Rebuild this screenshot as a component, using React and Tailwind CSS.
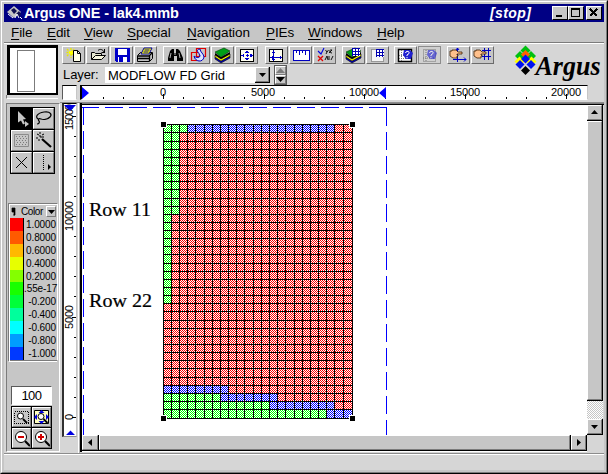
import React from "react";

const SANS = "font-['Liberation_Sans',Arial,sans-serif]";
const RAISED = "border border-t-white border-l-white border-b-[#7b7b7b] border-r-[#7b7b7b] bg-[#c6c6c6]";

/* ---------- toolbar drawings (23 x 18) ---------- */
const Layers = () => (
  <g>
    <path d="M4 11l6 4 9-5v2l-9 5-6-4z" fill="#0000c0" stroke="#000" strokeWidth=".6" />
    <path d="M4 9l6 4 9-5v2l-9 5-6-4z" fill="#ff0" stroke="#000" strokeWidth=".6" />
    <path d="M4 7l6 4 9-5v2l-9 5-6-4z" fill="#000" />
    <path d="M4 6l9-4 6 3-9 6z" fill="#00a018" stroke="#003800" strokeWidth=".6" />
  </g>
);

const Question = ({ dim }) => (
  <g opacity={dim ? 0.6 : 1}>
    <path d="M10 4h6l3 3-2 6h-5l-3-4z" fill="#2020d0" />
    <path d="M11.500 7c.5-2.500 4.500-2 3.500.5l-2 1.500v1M13 11v1.300" fill="none" stroke="#fff" />
  </g>
);

const Hand = () => (
  <path d="M3 5h2v-1h4l2 2h4v2h-5v1h1v1h-1v2H6l-3-2z" fill="#ffc08c" stroke="#402000" strokeWidth=".8" />
);

const Grid = ({ x, y, w = 8, h = 8 }) => (
  <g transform={`translate(${x},${y})`} shapeRendering="crispEdges">
    <rect width={w} height={h} fill="#fff" />
    <path d={`M0 .5H${w}M0 3.500H${w}M0 6.500H${w}M.5 0V${h}M3.500 0V${h}M6.500 0V${h}`} stroke="#0000b0" fill="none" />
  </g>
);

const ICONS = {
  new: (
    <>
      <path d="M9 2v10M4.500 6.500h9M5 3l7 7M5 10l7-7" stroke="#e8e800" strokeWidth="1.400" strokeDasharray="2 1" />
      <path d="M7 5h4v3H7z" fill="#ff0" />
      <path d="M11.500 4.500h4l3 3v8h-7z" fill="#ffffe8" stroke="#000" />
      <path d="M15.500 4.500v3h3" fill="none" stroke="#000" />
    </>
  ),
  open: (
    <>
      <path d="M5.500 13.500v-7h3l1 1h6v3" fill="#e8e8d0" stroke="#000" />
      <path d="M5.500 13.500l4-4h10l-4 4z" fill="#f4f4dc" stroke="#000" />
      <path d="M12 4.500c2-2 5-1 6 1.500M18.500 3v4M15.500 6.500h3" fill="none" stroke="#000" />
    </>
  ),
  save: (
    <g shapeRendering="crispEdges">
      <path d="M5 2h15v14H6l-1-1z" fill="#0000c8" />
      <path d="M8 3h9v6H8zM8 11h9v5H8z" fill="#fff" />
      <path d="M9 11h4v5H9z" fill="#0000c8" />
    </g>
  ),
  print: (
    <>
      <path d="M3.500 9.500l3-3h12v6l-3 3h-12z" fill="#c0c0c0" stroke="#000" />
      <path d="M4 10h11l3-3M4 12.500h11M15.500 10v5" fill="none" stroke="#000" strokeWidth="1.300" />
      <path d="M7 8l3-6h8l-3 6z" fill="#ff0" stroke="#0000a0" />
      <path d="M10.500 4h5M9.500 6h5" stroke="#0000a0" />
    </>
  ),
  find: (
    <>
      <path d="M7 5l2-2h2v4h2V3h2l2 2 3 7v3h-6v-5h-3v5H5v-3z" fill="#000" />
      <path d="M8 7l-1 5M16 7l1 5M12 7v2" stroke="#c6c6c6" strokeWidth=".9" />
    </>
  ),
  rotate: (
    <>
      <path d="M9.500 2.500h9v8h-9zM4.500 6.500h8v8h-8z" fill="none" stroke="#e00000" strokeWidth="1.200" />
      <path d="M13 3c-6 1 0 4 0 7-1 3-5 1-6 0 1 6 9 7 10 1 0-3-4-5-4-8z" fill="#d8e4ff" stroke="#0000c0" />
    </>
  ),
  layers: <Layers />,
  pan: (
    <g shapeRendering="crispEdges">
      <path d="M5.500 3.500h13v12h-13z" fill="#fffff0" stroke="#000" />
      <path d="M12 4l2 3h-4zM12 15l2-3h-4zM6 9.500l3-2v4zM18 9.500l-3-2v4z" fill="#0000d0" />
      <path d="M12 8v3M10.500 9.500h3" stroke="#0000d0" />
    </g>
  ),
  extent: (
    <g shapeRendering="crispEdges">
      <path d="M4.500 3.500h13v12h-13z" fill="#fffff0" stroke="#000" />
      <path d="M8.500 4v11M5 11.500h12" stroke="#0000c0" />
      <path d="M7 6h3M7 13h3M7 10v3M15 10v3" stroke="#0000c0" />
    </g>
  ),
  ruler: (
    <g shapeRendering="crispEdges">
      <path d="M4.500 4.500h16v10h-16z" fill="#fff" stroke="#0000c0" />
      <path d="M7.500 5v2M10.500 5v4M13.500 5v2M16.500 5v4" stroke="#0000c0" />
    </g>
  ),
  check: (
    <>
      <path d="M5 5l3 3 3-6" fill="none" stroke="#0000e0" strokeWidth="1.100" />
      <path d="M5 10l5 5M10 10l-5 5" stroke="#e00000" strokeWidth="1.300" />
      <path d="M12.500 4l1.500 2 1.500-2M14 6l-1 2M19 4c-3-1-3 3 0 3M16 7l3-3M12 14l2-4 1 4M16 14v-4M18 14l2-4" fill="none" stroke="#000" strokeWidth=".9" />
    </>
  ),
  layerGrid: (
    <>
      <Layers />
      <Grid x={10} y={2} />
    </>
  ),
  dotGrid: (
    <>
      <path d="M5.500 3.500h12v12h-12z" fill="#f4f4f4" stroke="#555" strokeDasharray="1 1" />
      <Grid x={10} y={3} />
    </>
  ),
  query: (
    <>
      <path d="M4.500 3.500h13v12h-13z" fill="#fff" stroke="#000" strokeWidth="1.400" />
      <path d="M5 12.500h11M7.500 4v11M5 9.500h11" stroke="#777" strokeDasharray="1 1" />
      <Question />
    </>
  ),
  queryDim: (
    <>
      <path d="M5.500 3.500h12v12h-12zM8 4v11M5 12h12" fill="none" stroke="#777" strokeDasharray="1 1" />
      <Question dim />
    </>
  ),
  handAxes: (
    <>
      <path d="M10.500 2v14M6 13.500h13M9 4l1.500-2L12 4M17 11.500l2 2-2 2" fill="none" stroke="#0000d0" />
      <Hand />
    </>
  ),
  handGrid: (
    <>
      <path d="M13.500 2v12M17.500 2v12M11 4.500h9M11 10.500h9" stroke="#0000c0" fill="none" />
      <Hand />
    </>
  ),
};

const ToolButton = ({ name, pressed }) => (
  <div
    className={`h-[18px] w-[23px] border ${
      pressed ? "border-[#8c8c8c] bg-[#d0d0d0]" : "border-t-white border-l-white border-b-[#6b6b6b] border-r-[#6b6b6b] bg-[#c6c6c6]"
    }`}
  >
    <svg className="-ml-px -mt-px block" width="23" height="18">{ICONS[name]}</svg>
  </div>
);

const GROUPS = [
  { gap: "ml-0", items: ["new", "open", "save", "print"] },
  { gap: "ml-[6px]", items: ["find", "rotate", "layers", "pan"] },
  { gap: "ml-[7px]", items: ["extent", "ruler", "check"] },
  { gap: "ml-[6px]", items: ["layerGrid", "dotGrid"] },
  { gap: "ml-[5px]", items: ["query", "queryDim"] },
  { gap: "ml-[6px]", items: ["handAxes", "handGrid"] },
];

const Logo = () => {
  const d = (x, y, r, fill) => <path key={`${x}-${y}`} d={`M${x} ${y - r}l${r} ${r}-${r} ${r}-${r}-${r}z`} fill={fill} />;
  return (
    <svg width="92" height="40" viewBox="512 45 92 40" className="block">
      {d(525.5, 50.5, 5, "#00c010")}
      {d(520, 56, 5, "#00c010")}
      {d(531, 56, 5, "#00c010")}
      {d(525.5, 54.5, 4.5, "#ff6000")}
      {d(519.5, 61.5, 5, "#ff0")}
      {d(531.5, 61.5, 5, "#ff0")}
      {d(525.5, 59, 4.5, "#0010f0")}
      {d(520, 64.500, 4.5, "#0010f0")}
      {d(531, 64.500, 4.5, "#0010f0")}
      {d(525.5, 70.500, 4.5, "#000")}
      <text x="535.500" y="74.500" textLength="65" lengthAdjust="spacingAndGlyphs" fontSize="28" fontWeight="bold" fontStyle="italic" fill="#000" fontFamily="'Liberation Serif', serif">
        Argus
      </text>
    </svg>
  );
};

/* ---------- rulers ---------- */
const MINOR = Array.from({ length: 24 }, (_, i) => Math.round(102.5 + i * 20.15));

const HRuler = () => (
  <svg width="503" height="13" viewBox="82 86 503 13" className="block">
    <g shapeRendering="crispEdges">
      {MINOR.map((x) => (
        <rect key={x} x={x} y="97" width="1" height="2" fill="#000" />
      ))}
      {[163, 264, 364, 465, 566].map((x) => (
        <rect key={x} x={x} y="94" width="1" height="5" fill="#000" />
      ))}
    </g>
    <path d="M82 87l7 6-7 6zM386 87l-7 6 7 6z" fill="#00f" />
    {[["0", 160, 6], ["5000", 251, 24], ["10000", 349, 30], ["15000", 450, 30], ["20000", 551, 30]].map(([t, x, w]) => (
      <text key={t} x={x} y="96" textLength={w} fontSize="11" fontFamily="'Liberation Sans', sans-serif">{t}</text>
    ))}
  </svg>
);

const VMINOR = Array.from({ length: 16 }, (_, i) => Math.round(417 - i * 20.1));

const VRuler = () => (
  <svg width="12" height="331" viewBox="64 104 12 331" className="block">
    <g shapeRendering="crispEdges">
      {VMINOR.map((y) => (
        <rect key={y} x="74" y={y} width="2" height="1" fill="#000" />
      ))}
      {[417, 317, 216, 116].map((y) => (
        <rect key={y} x="72" y={y} width="4" height="1" fill="#000" />
      ))}
    </g>
    {[["0", 420, 6], ["5000", 329, 24], ["10000", 231, 30], ["15000", 130, 26]].map(([t, y, w]) => (
      <text key={t} transform={`translate(73,${y}) rotate(-90)`} textLength={w} fontSize="11" fontFamily="'Liberation Sans', sans-serif">{t}</text>
    ))}
    <path d="M64 105h12l-6 6zM66 435l4.500-4.500 4.500 4.500z" fill="#0000e0" />
  </svg>
);

/* ---------- model grid ---------- */
const XS = [163, 171, 179, 187, 195, 204, 212, 220, 228, 236, 244, 253, 261, 269, 277, 285, 294, 302, 310, 318, 326, 334, 343, 352];
const YS = [124, 132, 141, 149, 157, 165, 173, 181, 189, 198, 206, 214, 222, 230, 238, 246, 254, 263, 271, 279, 287, 295, 303, 311, 320, 328, 336, 344, 352, 360, 368, 377, 385, 393, 401, 409, 418];
const ZONES = [
  [163, 124, 352, 418, "red"],
  [163, 124, 187, 132, "green"],
  [187, 124, 334, 132, "blue"],
  [163, 132, 179, 214, "green"],
  [163, 214, 171, 303, "green"],
  [163, 385, 228, 393, "blue"],
  [163, 393, 220, 401, "green"],
  [220, 393, 277, 401, "blue"],
  [163, 401, 269, 409, "green"],
  [269, 401, 334, 409, "blue"],
  [163, 409, 326, 418, "green"],
  [326, 409, 352, 418, "blue"],
];
const HUES = { red: "#ff0000", green: "#00ff00", blue: "#0000ff" };

const ModelCanvas = () => (
  <svg width="505" height="330" viewBox="82 105 505 330" className="block bg-white" shapeRendering="crispEdges">
    <defs>
      {Object.entries(HUES).map(([k, c]) => (
        <pattern key={k} id={k} width="2" height="2" patternUnits="userSpaceOnUse">
          <rect width="2" height="2" fill="#fff" />
          <rect width="1" height="1" fill={c} />
          <rect x="1" y="1" width="1" height="1" fill={c} />
        </pattern>
      ))}
    </defs>
    <g stroke="#0000ff" strokeDasharray="18 6" fill="none">
      <path d="M81 107.500H387" />
      <path d="M83.500 107V435" />
      <path d="M386.500 108V435" />
    </g>
    {ZONES.map(([a, b, c, d, k], i) => (
      <g key={i}>
        <rect x={a} y={b} width={c - a} height={d - b} fill="#fff" />
        <rect x={a} y={b} width={c - a} height={d - b} fill={`url(#${k})`} />
      </g>
    ))}
    {XS.map((x) => <rect key={x} x={x} y="124" width="1" height="295" />)}
    {YS.map((y) => <rect key={y} x="163" y={y} width="190" height="1" />)}
    {[[163, 124], [352, 124], [163, 418], [352, 418]].map(([x, y]) => (
      <g key={`${x}${y}`}>
        <rect x={x - 3} y={y - 3} width="7" height="7" fill="#fff" />
        <rect x={x - 2} y={y - 2} width="5" height="5" />
      </g>
    ))}
    <g fontFamily="'Liberation Serif', serif" fontSize="19" stroke="#000" strokeWidth=".2">
      <text x="89" y="216" textLength="62" lengthAdjust="spacingAndGlyphs">Row 11</text>
      <text x="89" y="307" textLength="63" lengthAdjust="spacingAndGlyphs">Row 22</text>
    </g>
  </svg>
);

/* ---------- left column ---------- */
const Tool = ({ active, children }) => (
  <div className={`h-[21px] w-[21px] ${active ? "bg-black" : RAISED}`}>
    <svg className={active ? "block" : "-ml-px -mt-px block"} width="21" height="21">{children}</svg>
  </div>
);

const DotPad = () => {
  const dots = [];
  for (let y = 6; y < 15; y += 2) for (let x = 5 + (y % 4 ? 0 : 1); x < 17; x += 3) dots.push([x, y]);
  return dots.map(([x, y]) => <rect key={`${x},${y}`} x={x} y={y} width="1" height="1" fill="#7b7b7b" />);
};

const SCALE = [
  ["1.0000", "bg-[#ff0000]"], ["0.8000", "bg-[#ff5a00]"], ["0.6000", "bg-[#ffb900]"], ["0.4000", "bg-[#e7ff00]"],
  ["0.2000", "bg-[#84ff00]"], [".55e-17", "bg-[#18ff00]"], ["-0.200", "bg-[#00ff39]"], ["-0.400", "bg-[#00ff9c]"],
  ["-0.600", "bg-[#00ffff]"], ["-0.800", "bg-[#009cff]"], ["-1.000", "bg-[#0039ff]"],
];

const Lens = ({ sign }) => (
  <>
    <path d="M13 13l5 5" stroke="#000" strokeWidth="2.200" />
    <circle cx="9" cy="9" r="5.500" fill="#fff" stroke="#000" />
    <path d={sign === "+" ? "M6 9h6M9 6v6" : "M6 9h6"} stroke="#d00000" strokeWidth="2" shapeRendering="crispEdges" />
  </>
);

const LeftColumn = () => (
  <div className="flex w-[56px] flex-col pl-[2px]">
    <div className="ml-px mt-px h-[50px] w-[51px] border-b-2 border-l-[3px] border-r-2 border-t-[3px] border-black bg-white pl-[7px] pt-[2px]">
      <div className="h-[42px] w-[18px] border border-[#7b7b7b]" />
    </div>
    <div className="h-[4px] w-[52px] border-b border-l border-b-white border-l-[#7b7b7b]" />
    <div className="mt-[4px] flex h-[349px] w-[54px] flex-col border border-t-[#7b7b7b] border-l-[#7b7b7b] border-b-white border-r-white bg-[#c6c6c6] pl-[3px]">
      <div className="mt-[3px] grid h-[67px] w-[45px] grid-cols-[21px_21px] gap-px border border-black bg-black">
        <Tool active>
          <path d="M7 3l8 8-3 .5 2 4-2 1-2-4-3 2z" fill="#c6c6c6" />
          <path d="M14 13l4 3-4 3z" fill="#c6c6c6" />
        </Tool>
        <Tool>
          <path d="M5 11c-3-2-1-6 6-7s8 3 6 5-6 3-9 2-3 1-2 2 0 3-2 3" fill="none" stroke="#000" strokeWidth="1.200" />
        </Tool>
        <Tool>
          <path d="M3.500 4.500h14v12h-14z" fill="none" stroke="#8c8c8c" />
          <DotPad />
        </Tool>
        <Tool>
          <path d="M9 9l9 8" stroke="#000" strokeWidth="2.200" />
          <path d="M4 4l2 1M7 2v2M11 4l-2 1M3 8h2M6 11v-2M9 7h2M6 6h2v2" stroke="#000" fill="none" />
        </Tool>
        <Tool>
          <path d="M5 5l11 11M16 5L5 16" stroke="#000" />
        </Tool>
        <Tool>
          <path d="M10.500 3v15" stroke="#000" strokeDasharray="1 1" />
          <path d="M15 12l3 3-3 3z" fill="#000" />
        </Tool>
      </div>
      <div className={`-ml-[2px] mt-[29px] h-[158px] w-[50px] border border-t-[#7b7b7b] border-l-[#7b7b7b] border-b-[#7b7b7b] border-r-white bg-[#c6c6c6] ${SANS}`}>
        <div className="flex h-[14px] items-center border-t border-l border-white pl-px">
          <svg width="7" height="10" className="block shrink-0"><path d="M1 1h3v7H3V5H1zM2 8h2" stroke="#000" strokeWidth=".7" /></svg>
          <span className="ml-[3px] w-[25px] shrink-0 text-[10px] leading-[12px] tracking-[-0.4px]">Color</span>
          <div className={`flex h-[11px] w-[10px] shrink-0 items-center justify-center ${RAISED}`}>
            <svg width="7" height="4"><path d="M0 0h7L3.500 4z" /></svg>
          </div>
        </div>
        <div className="border-l border-white border-b pb-px">
          {SCALE.map(([label, color]) => (
            <div key={label} className="flex h-[12.900px] items-stretch">
              <div className={`w-[14px] shrink-0 border-r border-black ${color}`} />
              <div className="flex-1 whitespace-nowrap pr-px text-right text-[10px] leading-[14px] tracking-[-0.1px]">{label}</div>
            </div>
          ))}
        </div>
      </div>
      <div className={`ml-px mt-[25px] h-[19px] w-[41px] border border-t-[#5a5a5a] border-l-[#5a5a5a] border-b-white border-r-white bg-white text-center text-[13px] leading-[18px] tracking-[-0.5px] ${SANS}`}>100</div>
      <div className="ml-px mt-px grid h-[43px] w-[41px] grid-cols-[19px_19px] gap-px border border-black bg-black">
        {[0, 1, 2, 3].map((i) => (
          <div key={i} className={`h-[20px] w-[19px] overflow-hidden ${RAISED}`}>
            <svg width="19" height="20" className="-ml-px -mt-px block">
              {i === 0 && (
                <>
                  <path d="M2.500 4.500h14v12h-14z" fill="none" stroke="#000" strokeDasharray="1 1" shapeRendering="crispEdges" />
                  <circle cx="8.500" cy="9" r="3" fill="#fff" stroke="#000" />
                  <path d="M11 12l4 4" stroke="#000" strokeWidth="1.800" />
                </>
              )}
              {i === 1 && (
                <>
                  <path d="M2.500 3.500h14v13h-14z" fill="#ffffc0" stroke="#000" />
                  <path d="M9.500 3l3 3h-6zM9.500 17l3-3h-6zM2 10l3-3v6zM17 10l-3-3v6z" fill="#0000e0" />
                  <circle cx="9" cy="9.500" r="3" fill="#fff" stroke="#000" />
                  <path d="M11.500 12l4 4" stroke="#000" strokeWidth="1.800" />
                </>
              )}
              {i === 2 && <Lens sign="-" />}
              {i === 3 && <Lens sign="+" />}
            </svg>
          </div>
        ))}
      </div>
    </div>
  </div>
);

const ArrowButton = ({ d, size }) => (
  <div className={`border-r border-b border-black ${size}`}>
    <div className={`flex h-full w-full items-center justify-center ${RAISED}`}>
      <svg width="7" height="7"><path d={d} /></svg>
    </div>
  </div>
);

const MENUS = [
  ["File", "w-[36px]"], ["Edit", "w-[37px]"], ["View", "w-[43px]"], ["Special", "w-[60px]"],
  ["Navigation", "w-[79px]"], ["PIEs", "w-[42px]"], ["Windows", "w-[69px]"], ["Help", "w-[40px]"],
];

const WindowButton = ({ children, className = "" }) => (
  <div className={`h-[14px] w-[16px] border border-t-white border-l-white border-b-black border-r-black bg-[#c6c6c6] ${className}`}>
    <svg width="14" height="12" className="block" shapeRendering="crispEdges">{children}</svg>
  </div>
);

export default function App() {
  return (
    <div className={`h-[474px] w-[608px] overflow-hidden border border-t-[#c6c6c6] border-l-[#c6c6c6] border-b-black border-r-black text-black ${SANS}`}>
      <div className="flex h-full w-full flex-col border border-t-white border-l-white border-b-[#7b7b7b] border-r-[#7b7b7b] bg-[#c6c6c6] p-[2px]">
        <div className="flex h-[18px] shrink-0 items-center bg-[#000084] text-white">
          <svg width="18" height="16" className="ml-[2px] block">
            <path d="M8 1l7 6-7 6-7-6z" fill="#c6c6c6" />
            <path d="M5 5l3-2 3 3-3 3zM10 9l3-3 2 3-2 3z" fill="#101050" />
            <path d="M2 9l5 4M9 13l2-4 2 4M14 12l2 2" stroke="#fff" fill="none" />
          </svg>
          <span className="w-[466px] whitespace-nowrap text-[14.500px] font-bold leading-[18px] tracking-[-0.120px]">Argus ONE - lak4.mmb</span>
          <span className="w-[62px] whitespace-nowrap text-[14px] font-bold italic leading-[18px] tracking-[0.400px]">[stop]</span>
          <WindowButton><rect x="3" y="8" width="6" height="2" /></WindowButton>
          <WindowButton><path d="M2.500 2.500h8v7h-8zM2 2h9" fill="none" stroke="#000" /><rect x="2" y="1" width="9" height="2" /></WindowButton>
          <WindowButton className="ml-[2px]"><path d="M3 2l7 7M10 2L3 9" stroke="#000" strokeWidth="1.600" /></WindowButton>
        </div>
        <div className="flex h-[20px] shrink-0 pl-[7px] text-[13.500px] leading-[21px]">
          {MENUS.map(([m, w]) => (
            <div key={m} className={`shrink-0 whitespace-nowrap tracking-[-0.100px] ${w}`}>
              <span className="underline underline-offset-[2px] decoration-1">{m[0]}</span>{m.slice(1)}
            </div>
          ))}
        </div>
        <div className="h-[2px] shrink-0 border-b border-t border-b-white border-t-[#7b7b7b]" />
        <div className="flex h-[409px] shrink-0 bg-[#d6d6d6]">
          <LeftColumn />
          <div className="flex w-[544px] flex-col">
            <div className="flex h-[41px]">
              <div className="flex w-[452px] flex-col">
                <div className="flex h-[20px] pl-[2px] pt-[2px]">
                  {GROUPS.map((g, i) => (
                    <div key={i} className={`flex gap-px ${g.gap}`}>
                      {g.items.map((n) => <ToolButton key={n} name={n} pressed={n === "queryDim"} />)}
                    </div>
                  ))}
                </div>
                <div className="flex h-[21px] items-center pl-[3px] text-[13px]">
                  <span className="w-[42px] leading-[18px] tracking-[-0.1px]">Layer:</span>
                  <div className="mt-[1px] flex h-[16px] w-[165px] justify-between bg-white pl-[3px]">
                    <span className="whitespace-nowrap leading-[17px]">MODFLOW FD Grid</span>
                    <ArrowButton size="h-[16px] w-[15px]" d="M0 2h7L3.500 6z" />
                  </div>
                  <div className="ml-[4px] flex h-[20px] w-[13px] flex-col border border-[#5a5a5a]">
                    <div className={`flex flex-1 items-center justify-center ${RAISED}`}><svg width="9" height="5"><path d="M0 5h9L4.500 0z" fill="#7b7b7b" /></svg></div>
                    <div className={`flex flex-1 items-center justify-center border-t-black ${RAISED}`}><svg width="9" height="5"><path d="M0 0h9L4.500 5z" /></svg></div>
                  </div>
                </div>
              </div>
              <div className="pt-px"><Logo /></div>
            </div>
            <div className="flex h-[15px] pl-[2px]">
              <div className="h-[15px] w-[15px] border border-t-black border-l-[#5a5a5a] border-b-white border-r-[#c6c6c6] bg-white" />
              <div className="ml-[3px] h-[15px] w-[508px] border-b border-l-[2px] border-r border-t border-t-black border-l-black border-b-white border-r-[#c6c6c6] bg-white"><HRuler /></div>
            </div>
            <div className="mt-[2px] h-px bg-[#8c8c8c]" />
            <div className="flex h-[350px]">
              <div className="ml-[2px] h-[334px] w-[15px] border-b border-l-[2px] border-r border-t border-t-black border-l-[#303030] border-b-[#8c8c8c] border-r-[#c6c6c6] bg-white"><VRuler /></div>
              <div className="ml-px w-[2px] border-l border-white bg-[#b0b0b0]" />
              <div className="flex h-[349px] w-[524px] flex-col border-l-[2px] border-l-black">
                <div className="h-[2px] border-b border-t border-b-black border-t-[#7b7b7b]" />
                <div className="flex h-[330px]">
                  <ModelCanvas />
                  <div className="flex w-[16px] flex-col">
                    <ArrowButton size="h-[16px] w-[16px]" d="M0 5h7L3.500 1z" />
                    <div className="h-[280px] w-[16px] border-b border-r border-black"><div className={`h-full w-full ${RAISED}`} /></div>
                    <div className="h-[18px] bg-[conic-gradient(#fff_25%,#c6c6c6_0_50%,#fff_0_75%,#c6c6c6_0)] bg-[length:2px_2px]" />
                    <ArrowButton size="h-[16px] w-[16px]" d="M0 2h7L3.500 6z" />
                  </div>
                </div>
                <div className="flex h-[16px] w-[505px]">
                  <ArrowButton size="h-[16px] w-[17px]" d="M5 0v7L1 3.500z" />
                  <div className="h-[16px] w-[472px] border-b border-r border-black"><div className={`h-full w-full ${RAISED}`} /></div>
                  <ArrowButton size="h-[16px] w-[16px]" d="M2 0v7l4-3.500z" />
                </div>
                <div className="h-px w-[505px] bg-white" />
              </div>
            </div>
          </div>
        </div>
        <div className="h-[2px] shrink-0 border-b border-t border-b-white border-t-[#8c8c8c]" />
        <div className="flex-1 bg-[#d6d6d6]" />
      </div>
    </div>
  );
}
